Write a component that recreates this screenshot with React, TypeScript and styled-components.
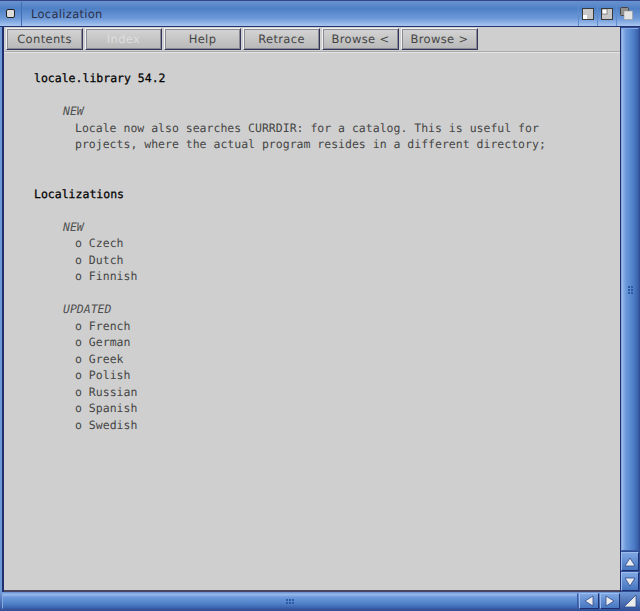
import React from 'react';
import styled, { createGlobalStyle } from 'styled-components';

const GlobalStyle = createGlobalStyle`
  html, body { margin: 0; padding: 0; background: #cfcfcf; }
  * { box-sizing: border-box; }
`;

const Window = styled.div`
  width: 640px;
  height: 611px;
  display: flex;
  flex-direction: column;
  overflow: hidden;
  font-family: 'DejaVu Sans', sans-serif;
  text-rendering: geometricPrecision;
`;

const TitleBar = styled.div`
  height: 27px;
  flex: none;
  display: flex;
  align-items: center;
  padding-right: 5px;
  border-top: 1px solid #33468c;
  border-bottom: 1px solid #23336e;
  background: linear-gradient(#6a93d0, #4f80c6 30%, #6d99d8 70%, #a9c6f0);
`;

const Gadget = styled.div`
  width: 19px;
  height: 24px;
  flex: none;
  display: flex;
  align-items: center;
  justify-content: center;
  border-left: 1px solid #5f8ccc;
`;

const CloseGadget = styled.div`
  width: 22px;
  height: 24px;
  flex: none;
  display: flex;
  align-items: center;
  justify-content: center;
  border-right: 1px solid #3f6cb2;
  margin-right: 9px;
`;

const Title = styled.div`
  flex: 1;
  font-size: 11.5px;
  letter-spacing: 0.3px;
  color: #2a2f48;
`;

const Middle = styled.div`
  flex: 1;
  min-height: 0;
  display: flex;
`;

const LeftEdge = styled.div`
  width: 4px;
  flex: none;
  background: linear-gradient(90deg, #6f98d6 0 2px, #1f2f6e 2px 4px);
`;

const Content = styled.div`
  flex: 1;
  min-width: 0;
  display: flex;
  flex-direction: column;
  background: #cfcfcf;
  border-bottom: 2px solid #4a4560;
`;

const Toolbar = styled.div`
  flex: none;
  height: 25px;
  display: flex;
  gap: 2px;
  padding: 1px 0 0 2px;
  border-bottom: 1px solid #aaaaaa;
  box-shadow: 0 1px 0 #e4e4e4;
`;

const ToolButton = styled.div<{ $off?: boolean }>`
  width: 77px;
  height: 22px;
  display: flex;
  align-items: center;
  justify-content: center;
  font-size: 11.5px;
  letter-spacing: 0.35px;
  color: ${(p) => (p.$off ? '#dedede' : '#444444')};
  background: linear-gradient(#d4d4d4, #b8b8b8);
  border: 1px solid;
  border-color: #f2f2f2 #33365a #33365a #f2f2f2;
  outline: 1px solid #8a8a92;
  outline-offset: -2px;
`;

const Page = styled.div`
  flex: 1;
  min-height: 0;
  padding: 18px 0 0 30px;
  font-family: 'DejaVu Sans Mono', monospace;
  font-size: 11.5px;
  line-height: 16.5px;
  color: #454545;
  white-space: pre;
`;

const Heading = styled.div`
  color: #000000;
  -webkit-text-stroke: 0.25px #000;
  margin-bottom: 16.5px;
`;

const Tag = styled.div`
  margin-left: 29px;
  font-style: italic;
  color: #505050;
`;

const Para = styled.div<{ $after?: number }>`
  margin-left: 41px;
  margin-bottom: ${(p) => p.$after ?? 0}px;
`;

const Scrollbar = styled.div`
  width: 20px;
  flex: none;
  display: flex;
  flex-direction: column;
  gap: 1px;
  padding: 1px 1px 1px 0;
  border-left: 1px solid #1f2f6e;
  background: #2f4f98;
`;

const Track = styled.div<{ $vertical?: boolean }>`
  flex: 1;
  min-width: 0;
  min-height: 0;
  display: flex;
  align-items: center;
  justify-content: center;
  background: ${(p) =>
    p.$vertical
      ? 'linear-gradient(90deg, #9bbcec, #6a98da 25%, #4f80c8 70%, #3a62ac)'
      : 'linear-gradient(#9bbcec, #6a98da 25%, #4f80c8 70%, #3a62ac)'};
  border: 1px solid #86a9e0;
  border-right-color: #3a5aa4;
  border-bottom-color: #3a5aa4;
`;

const ArrowButton = styled.div`
  width: 18px;
  height: 19px;
  flex: none;
  display: flex;
  align-items: center;
  justify-content: center;
  background: linear-gradient(#7ea6e2, #4676c0);
  border: 1px solid;
  border-color: #9bbcec #1f2f6e #1f2f6e #9bbcec;
`;

const HArrowButton = styled(ArrowButton)`
  width: 20px;
  height: 16px;
`;

const BottomBar = styled.div`
  flex: none;
  height: 19px;
  display: flex;
  gap: 1px;
  padding: 1px 2px 2px 2px;
  background: linear-gradient(#6f98d6, #2f4f98);
`;

const Corner = styled.div`
  width: 17px;
  flex: none;
  display: flex;
  align-items: center;
  justify-content: center;
`;

const Icon = styled.svg`
  display: block;
`;

const Dots = ({ vertical }: { vertical?: boolean }) => (
  <Icon width={vertical ? 6 : 10} height={vertical ? 10 : 6} fill="#2d5aa4">
    {(vertical
      ? [[1, 1], [4, 1], [1, 4], [4, 4], [1, 7], [4, 7]]
      : [[1, 1], [4, 1], [7, 1], [1, 4], [4, 4], [7, 4]]
    ).map(([x, y]) => (
      <rect key={`${x}-${y}`} x={x} y={y} width="2" height="2" />
    ))}
  </Icon>
);

const Arrow = ({ points, size = 12 }: { points: string; size?: number }) => (
  <Icon width={size} height={size}>
    <polygon points={points} fill="#ececec" stroke="#2f4a8c" strokeWidth="0.8" strokeLinejoin="round" />
  </Icon>
);

const buttons: [string, boolean?][] = [
  ['Contents'],
  ['Index', true],
  ['Help'],
  ['Retrace'],
  ['Browse <'],
  ['Browse >'],
];

const newLangs = ['Czech', 'Dutch', 'Finnish'];
const updatedLangs = ['French', 'German', 'Greek', 'Polish', 'Russian', 'Spanish', 'Swedish'];

export default function App() {
  return (
    <Window>
      <GlobalStyle />
      <TitleBar>
        <CloseGadget>
          <Icon width="9" height="9">
            <rect x="0.5" y="0.5" width="8" height="8" rx="1.5" fill="#dcdcdc" stroke="#222" />
          </Icon>
        </CloseGadget>
        <Title>Localization</Title>
        <Gadget>
          <Icon width="12" height="12">
            <rect x="0.5" y="0.5" width="11" height="11" fill="#c8c8c8" stroke="#3a3a3a" />
            <rect x="1" y="7" width="4" height="4" fill="#ffffff" />
          </Icon>
        </Gadget>
        <Gadget>
          <Icon width="12" height="12">
            <rect x="0.5" y="0.5" width="11" height="11" fill="#c8c8c8" stroke="#3a3a3a" />
            <rect x="1" y="1" width="5" height="5" fill="#ffffff" stroke="#3a3a3a" strokeWidth="0.5" />
          </Icon>
        </Gadget>
        <Gadget>
          <Icon width="13" height="13">
            <rect x="0.5" y="0.5" width="8" height="8" rx="1" fill="#8f8f8f" stroke="#444" />
            <rect x="4" y="4" width="8.5" height="8.5" fill="#e4e4e4" stroke="#999" strokeWidth="0.6" />
          </Icon>
        </Gadget>
      </TitleBar>
      <Middle>
        <LeftEdge />
        <Content>
          <Toolbar>
            {buttons.map(([label, off]) => (
              <ToolButton key={label} $off={off}>
                {label}
              </ToolButton>
            ))}
          </Toolbar>
          <Page>
            <Heading>locale.library 54.2</Heading>
            <Tag>NEW</Tag>
            <Para>Locale now also searches CURRDIR: for a catalog. This is useful for</Para>
            <Para $after={33}>projects, where the actual program resides in a different directory;</Para>
            <Heading>Localizations</Heading>
            <Tag>NEW</Tag>
            <Para $after={16.5}>
              {newLangs.map((l) => (
                <div key={l}>o {l}</div>
              ))}
            </Para>
            <Tag>UPDATED</Tag>
            <Para>
              {updatedLangs.map((l) => (
                <div key={l}>o {l}</div>
              ))}
            </Para>
          </Page>
        </Content>
        <Scrollbar>
          <Track $vertical>
            <Dots vertical />
          </Track>
          <ArrowButton>
            <Arrow points="6,2 11,10 1,10" />
          </ArrowButton>
          <ArrowButton>
            <Arrow points="1,2 11,2 6,10" />
          </ArrowButton>
        </Scrollbar>
      </Middle>
      <BottomBar>
        <Track>
          <Dots />
        </Track>
        <HArrowButton>
          <Arrow points="2,6 10,1 10,11" />
        </HArrowButton>
        <HArrowButton>
          <Arrow points="2,1 10,6 2,11" />
        </HArrowButton>
        <Corner>
          <Arrow points="1,13 13,13 13,1" size={14} />
        </Corner>
      </BottomBar>
    </Window>
  );
}
